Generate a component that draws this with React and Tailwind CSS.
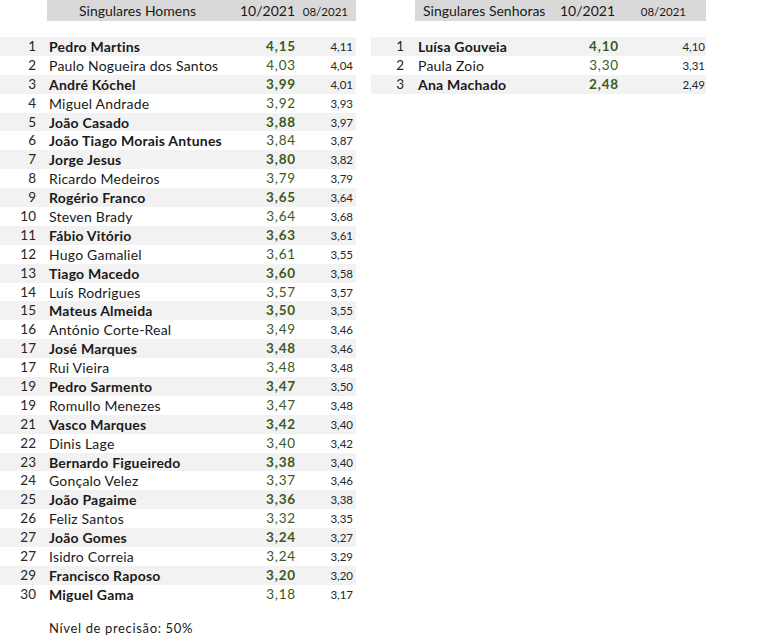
const men = [
  ["1", "Pedro Martins", "4,15", "4,11", true],
  ["2", "Paulo Nogueira dos Santos", "4,03", "4,04", false],
  ["3", "André Kóchel", "3,99", "4,01", true],
  ["4", "Miguel Andrade", "3,92", "3,93", false],
  ["5", "João Casado", "3,88", "3,97", true],
  ["6", "João Tiago Morais Antunes", "3,84", "3,87", true],
  ["7", "Jorge Jesus", "3,80", "3,82", true],
  ["8", "Ricardo Medeiros", "3,79", "3,79", false],
  ["9", "Rogério Franco", "3,65", "3,64", true],
  ["10", "Steven Brady", "3,64", "3,68", false],
  ["11", "Fábio Vitório", "3,63", "3,61", true],
  ["12", "Hugo Gamaliel", "3,61", "3,55", false],
  ["13", "Tiago Macedo", "3,60", "3,58", true],
  ["14", "Luís Rodrigues", "3,57", "3,57", false],
  ["15", "Mateus Almeida", "3,50", "3,55", true],
  ["16", "António Corte-Real", "3,49", "3,46", false],
  ["17", "José Marques", "3,48", "3,46", true],
  ["17", "Rui Vieira", "3,48", "3,48", false],
  ["19", "Pedro Sarmento", "3,47", "3,50", true],
  ["19", "Romullo Menezes", "3,47", "3,48", false],
  ["21", "Vasco Marques", "3,42", "3,40", true],
  ["22", "Dinis Lage", "3,40", "3,42", false],
  ["23", "Bernardo Figueiredo", "3,38", "3,40", true],
  ["24", "Gonçalo Velez", "3,37", "3,46", false],
  ["25", "João Pagaime", "3,36", "3,38", true],
  ["26", "Feliz Santos", "3,32", "3,35", false],
  ["27", "João Gomes", "3,24", "3,27", true],
  ["27", "Isidro Correia", "3,24", "3,29", false],
  ["29", "Francisco Raposo", "3,20", "3,20", true],
  ["30", "Miguel Gama", "3,18", "3,17", true],
];

const women = [
  ["1", "Luísa Gouveia", "4,10", "4,10", true],
  ["2", "Paula Zoio", "3,30", "3,31", false],
  ["3", "Ana Machado", "2,48", "2,49", true],
];

function Row({ r, i, cols, numPr, namePl, scorePr, oldPr }) {
  const shaded = i % 2 === 0;
  return (
    <div
      className={`grid h-[18.9px] items-center ${cols} ${shaded ? "bg-[#f2f2f2]" : ""}`}
    >
      <div className={`text-right text-[13.5px] leading-[17px] text-[#262626] ${numPr}`}>{r[0]}</div>
      <div
        className={`whitespace-nowrap text-[14px] leading-[17px] tracking-[0.015em] text-[#1a1a1a] ${namePl} ${r[4] ? "font-bold" : ""}`}
      >
        {r[1]}
      </div>
      <div
        className={`text-right text-[13.5px] leading-[17px] tracking-[0.06em] text-[#3a5a1c] ${scorePr} ${shaded ? "font-bold" : ""}`}
      >
        {r[2]}
      </div>
      <div className={`text-right text-[11.5px] leading-[17px] text-[#262626] ${oldPr}`}>{r[3]}</div>
    </div>
  );
}

export default function App() {
  return (
    <div
      className="w-[779px] h-[641px] bg-white"
      style={{ fontFamily: "Lato, 'Open Sans', sans-serif" }}
    >
      <div className="flex gap-[15px]">
        {/* Men */}
        <div className="w-[356px] flex flex-col">
          <div className="grid h-[18px] grid-cols-[47px_193px_60px_56px]">
            <div />
            <div className="col-span-3 grid grid-cols-[193px_60px_56px] bg-[#d9d9d9] items-center">
              <div className="pl-[32px] text-[14px] text-[#1a1a1a] whitespace-nowrap">Singulares Homens</div>
              <div className="text-right pr-[10px] text-[14px] text-[#1a1a1a] whitespace-nowrap">10/2021</div>
              <div className="text-right pr-[8px] text-[11.5px] text-[#1a1a1a] pt-[2px] whitespace-nowrap">08/2021</div>
            </div>
          </div>
          <div className="h-[19px]" />
          {men.map((r, i) => (
            <Row
              key={i}
              r={r}
              i={i}
              cols="grid-cols-[47px_193px_60px_56px]"
              numPr="pr-[11px]"
              namePl="pl-[2px]"
              scorePr="pr-[4px]"
              oldPr="pr-[3px]"
            />
          ))}
          <div className="h-[15.5px]" />
          <div className="h-[19px] flex items-center pl-[49px] text-[13px] tracking-[0.05em] text-[#1a1a1a]">
            Nível de precisão: 50%
          </div>
        </div>

        {/* Women */}
        <div className="w-[335px] flex flex-col">
          <div className="grid h-[18px] grid-cols-[44px_145px_65px_81px]">
            <div />
            <div className="col-span-3 grid grid-cols-[145px_65px_81px] bg-[#d9d9d9] items-center">
              <div className="pl-[8px] text-[14px] text-[#1a1a1a] whitespace-nowrap">Singulares Senhoras</div>
              <div className="text-left text-[14px] text-[#1a1a1a] whitespace-nowrap">10/2021</div>
              <div className="text-right pr-[20px] text-[11.5px] text-[#1a1a1a] pt-[3px] whitespace-nowrap">08/2021</div>
            </div>
          </div>
          <div className="h-[19px]" />
          {women.map((r, i) => (
            <Row
              key={i}
              r={r}
              i={i}
              cols="grid-cols-[44px_145px_65px_81px]"
              numPr="pr-[11px]"
              namePl="pl-[3px]"
              scorePr="pr-[6px]"
              oldPr="pr-[1px]"
            />
          ))}
        </div>
      </div>
    </div>
  );
}
